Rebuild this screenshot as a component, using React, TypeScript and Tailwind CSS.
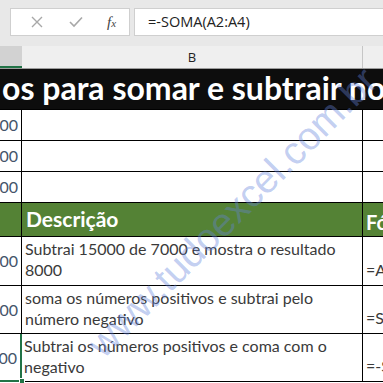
import React from "react";

const lato = { fontFamily: "Lato, 'Open Sans', sans-serif" };

export default function App() {
  const rowsTop = [0, 1, 2];
  const data = [
    { b: ["Subtrai 15000 de 7000 e mostra o resultado", "8000"], c: "=A2-A3", sel: false },
    { b: ["soma os números positivos e subtrai pelo", "número negativo"], c: "=SOMA(A2:A4)", sel: false },
    { b: ["Subtrai os números positivos e coma com o", "negativo"], c: "=-SOMA(A2:A4)", sel: true },
  ];
  return (
    <div className="relative w-[383px] h-[383px] overflow-hidden bg-white" style={lato}>
      {/* formula bar */}
      <div className="h-[46px] bg-[#e8e8e8] flex items-start pt-[8px]">
        <div className="ml-[10px] w-[120px] shrink-0 h-[28px] bg-white border border-[#cfcfcf] flex items-center">
          <svg width="12" height="12" viewBox="0 0 12 12" className="ml-[20px]">
            <path d="M1 1 L11 11 M11 1 L1 11" stroke="#a8a8a8" strokeWidth="1.4" fill="none" />
          </svg>
          <svg width="14" height="12" viewBox="0 0 14 12" className="ml-[26px]">
            <path d="M1 6 L5 10 L13 1.5" stroke="#a8a8a8" strokeWidth="1.6" fill="none" />
          </svg>
          <span className="ml-[24px] text-[15px] italic text-[#444] leading-none" style={{ fontFamily: "'Liberation Serif', serif" }}>
            f<span className="text-[11px]">x</span>
          </span>
        </div>
        <div className="ml-[4px] flex-1 min-w-0 h-[28px] bg-white border border-[#cfcfcf] border-r-0 flex items-center pl-[13px]">
          <span className="text-[14.5px] text-[#222]" style={{ fontFamily: "'Open Sans', sans-serif" }}>=-SOMA(A2:A4)</span>
        </div>
      </div>
      {/* column headers */}
      <div className="h-[23px] flex border-b border-[#9c9c9c]">
        <div className="w-[22px] shrink-0 h-full bg-[#d2d2d2] border-b-2 border-[#217346]" />
        <div className="w-[341px] shrink-0 h-full bg-[#efefef] border-r border-[#c6c6c6] flex items-center justify-center">
          <span className="text-[13px] text-[#222] pt-[1px]" style={{ fontFamily: "'Open Sans', sans-serif" }}>B</span>
        </div>
        <div className="flex-1 min-w-0 h-full bg-[#efefef]" />
      </div>
      {/* title row */}
      <div className="h-[41px] bg-[#0d0d0d] border-b border-black flex items-center overflow-hidden pl-[2px]">
        <span className="whitespace-nowrap text-white font-bold text-[32px] leading-none pb-[3px]" style={lato}>
          os para somar e subtrair no Excel
        </span>
      </div>
      {/* rows 1-3 */}
      {rowsTop.map((i) => (
        <div key={i} className="h-[31px] flex border-b border-black">
          <div className="w-[22px] shrink-0 border-r border-black flex items-center justify-end pr-[3px] overflow-hidden">
            <span className="text-[16px] text-[#44546a] whitespace-nowrap">{["15000", "-7000", "-8000"][i].slice(-3)}</span>
          </div>
          <div className="w-[341px] shrink-0 border-r border-black" />
          <div className="flex-1 min-w-0" />
        </div>
      ))}
      {/* header row */}
      <div className="h-[34px] flex bg-[#548235] border-b border-black">
        <div className="w-[22px] shrink-0 border-r border-black" />
        <div className="w-[341px] shrink-0 border-r border-black flex items-center pl-[4px]">
          <span className="text-white font-bold text-[21px] leading-none pb-[3px]">Descrição</span>
        </div>
        <div className="flex-1 min-w-0 flex items-end pl-[3px] pb-[4px] overflow-hidden">
          <span className="text-white font-bold text-[20px] leading-none whitespace-nowrap">Fórmula</span>
        </div>
      </div>
      {/* data rows */}
      {data.map((r, i) => (
        <div key={i} className={`flex border-b border-black ${i === 0 ? "h-[49px]" : "h-[48px]"}`}>
          <div
            className={`w-[22px] shrink-0 flex items-center justify-end pr-[3px] overflow-hidden ${
              r.sel ? "border-r-2 border-[#217346]" : "border-r border-black"
            }`}
          >
            <span className="text-[16px] text-[#44546a] whitespace-nowrap">000</span>
          </div>
          <div className={`w-[341px] shrink-0 border-r border-black pt-[1px] flex flex-col ${r.sel ? "pl-[2px]" : "pl-[3px]"}`}>
            <span className="text-[16px] leading-[21px] text-[#3a3a3a] whitespace-nowrap">{r.b[0]}</span>
            <span className="text-[16px] leading-[21px] text-[#3a3a3a] whitespace-nowrap">{r.b[1]}</span>
          </div>
          <div className="flex-1 min-w-0 flex items-end pl-[3px] pb-[7px] overflow-hidden">
            <span className="text-[16px] leading-none text-[#3a3a3a] whitespace-nowrap">{r.c}</span>
          </div>
        </div>
      ))}
      {/* selection bottom + handle */}
      <div className="absolute left-0 top-[380px] w-[22px] h-[2px] bg-[#217346]" />
      <div className="absolute left-[19px] top-[378px] w-[6px] h-[6px] bg-[#217346] border border-white" />
      {/* watermark */}
      <div
        className="absolute left-[232px] top-[212px] -translate-x-1/2 -translate-y-1/2 -rotate-45 whitespace-nowrap text-[39px] leading-none text-[rgba(100,130,220,0.4)] pointer-events-none"
        style={{ fontFamily: "'Liberation Sans', Arial, sans-serif" }}
      >
        www.tudoexcel.com.br
      </div>
    </div>
  );
}
